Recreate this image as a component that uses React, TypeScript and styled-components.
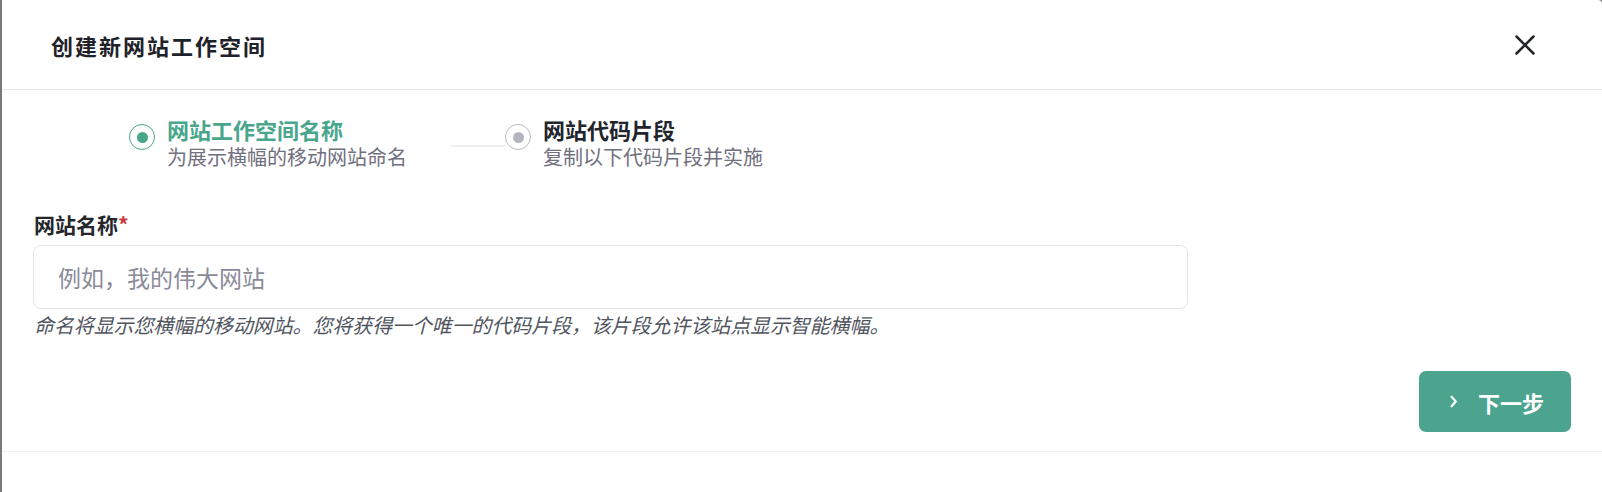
import React from 'react';
import styled, { createGlobalStyle } from 'styled-components';

const GlobalStyle = createGlobalStyle`
  html, body {
    margin: 0;
    padding: 0;
    height: 100%;
    background: #7a7a7a;
  }
  body {
    font-family: "Noto Sans", "Noto Sans CJK SC", sans-serif;
  }
  #root {
    height: 100%;
  }
  * {
    box-sizing: border-box;
  }
`;

const Modal = styled.div`
  margin-left: 2px;
  height: 100%;
  background: #ffffff;
  border-top-right-radius: 4px;
  display: flex;
  flex-direction: column;
`;

const Header = styled.header`
  height: 90px;
  flex-shrink: 0;
  display: flex;
  align-items: center;
  justify-content: space-between;
  padding: 0 67px 0 49px;
  border-bottom: 1px solid #e6e6e6;
`;

const Title = styled.h2`
  margin: 0;
  font-family: "Noto Sans CJK SC", "Noto Sans", sans-serif;
  font-size: 22px;
  letter-spacing: 2px;
  font-weight: 700;
  color: #1f2228;
`;

const CloseButton = styled.button`
  border: 0;
  background: none;
  padding: 0;
  width: 20px;
  height: 20px;
  display: flex;
  align-items: center;
  justify-content: center;
  cursor: pointer;
`;

const Body = styled.div`
  padding: 0 31px 19px 31px;
  border-bottom: 1px solid #efefef;
  display: flex;
  flex-direction: column;
`;

const Steps = styled.div`
  display: flex;
  align-items: flex-start;
  padding: 26px 0 0 96px;
`;

const Step = styled.div`
  display: flex;
  align-items: flex-start;
  gap: 12px;
`;

const Radio = styled.span<{ $active?: boolean }>`
  width: 26px;
  height: 26px;
  margin-top: 8px;
  flex-shrink: 0;
  border-radius: 50%;
  border: 1.5px solid ${p => (p.$active ? '#48a68b' : '#b9bcc4')};
  display: flex;
  align-items: center;
  justify-content: center;
  background: #fff;

  &::after {
    content: '';
    width: 11px;
    height: 11px;
    border-radius: 50%;
    background: ${p => (p.$active ? '#48a68b' : '#b3b6be')};
  }
`;

const StepText = styled.div`
  display: flex;
  flex-direction: column;
  font-family: "Noto Sans CJK SC", "Noto Sans", sans-serif;
`;

const StepTitle = styled.div<{ $active?: boolean }>`
  font-size: 22px;
  line-height: 27px;
  font-weight: 700;
  color: ${p => (p.$active ? '#48a68b' : '#22252b')};
`;

const StepSub = styled.div`
  font-size: 20px;
  line-height: 27px;
  color: #70707e;
`;

const Connector = styled.div`
  width: 54px;
  height: 2px;
  margin: 29px 0 0 44px;
  background: #eeeeee;
`;

const Field = styled.div`
  display: flex;
  flex-direction: column;
  margin-top: 41px;
  max-width: 1155px;
`;

const Label = styled.label`
  font-family: "Noto Sans CJK SC", "Noto Sans", sans-serif;
  font-size: 21px;
  line-height: 27px;
  font-weight: 700;
  color: #24262c;
  padding-left: 1px;
`;

const Required = styled.span`
  color: #c53a3a;
`;

const Input = styled.input`
  margin-top: 7px;
  height: 64px;
  width: 100%;
  border: 1px solid #e4e6ea;
  border-radius: 8px;
  padding: 0 24px;
  font-family: "Noto Sans CJK SC", "Noto Sans", sans-serif;
  font-size: 23px;
  color: #22252b;
  outline: none;

  &::placeholder {
    color: #8b8a99;
  }
`;

const Help = styled.p`
  margin: 2px 0 0;
  padding-left: 1px;
  font-family: "Noto Sans CJK SC", "Noto Sans", sans-serif;
  font-size: 19.9px;
  line-height: 27px;
  font-style: italic;
  color: #50545e;
  white-space: nowrap;
`;

const Actions = styled.div`
  display: flex;
  justify-content: flex-end;
  margin-top: 33px;
`;

const PrimaryButton = styled.button`
  height: 61px;
  width: 152px;
  border: 0;
  border-radius: 7px;
  background: #4da48e;
  color: #ffffff;
  display: flex;
  align-items: center;
  padding: 0 0 0 30px;
  gap: 20px;
  font-family: "Noto Sans CJK SC", "Noto Sans", sans-serif;
  font-size: 22px;
  font-weight: 700;
  cursor: pointer;
`;

const CloseIcon = () => (
  <svg width="20" height="20" viewBox="0 0 20 20" fill="none">
    <path d="M1.5 1.5L18.5 18.5M18.5 1.5L1.5 18.5" stroke="#23262b" strokeWidth="2.5" strokeLinecap="round" />
  </svg>
);

const ChevronIcon = () => (
  <svg width="9" height="13" viewBox="0 0 9 13" fill="none">
    <path d="M2.5 1.8L6.8 6.5L2.5 11.2" stroke="#ffffff" strokeWidth="2.2" strokeLinecap="round" strokeLinejoin="round" />
  </svg>
);

const App: React.FC = () => {
  return (
    <>
      <GlobalStyle />
      <Modal>
        <Header>
          <Title>创建新网站工作空间</Title>
          <CloseButton aria-label="关闭">
            <CloseIcon />
          </CloseButton>
        </Header>
        <Body>
          <Steps>
            <Step>
              <Radio $active />
              <StepText>
                <StepTitle $active>网站工作空间名称</StepTitle>
                <StepSub>为展示横幅的移动网站命名</StepSub>
              </StepText>
            </Step>
            <Connector />
            <Step>
              <Radio />
              <StepText>
                <StepTitle>网站代码片段</StepTitle>
                <StepSub>复制以下代码片段并实施</StepSub>
              </StepText>
            </Step>
          </Steps>
          <Field>
            <Label>
              网站名称<Required>*</Required>
            </Label>
            <Input placeholder="例如，我的伟大网站" />
            <Help>命名将显示您横幅的移动网站。您将获得一个唯一的代码片段，该片段允许该站点显示智能横幅。</Help>
          </Field>
          <Actions>
            <PrimaryButton>
              <ChevronIcon />
              下一步
            </PrimaryButton>
          </Actions>
        </Body>
      </Modal>
    </>
  );
};

export default App;
